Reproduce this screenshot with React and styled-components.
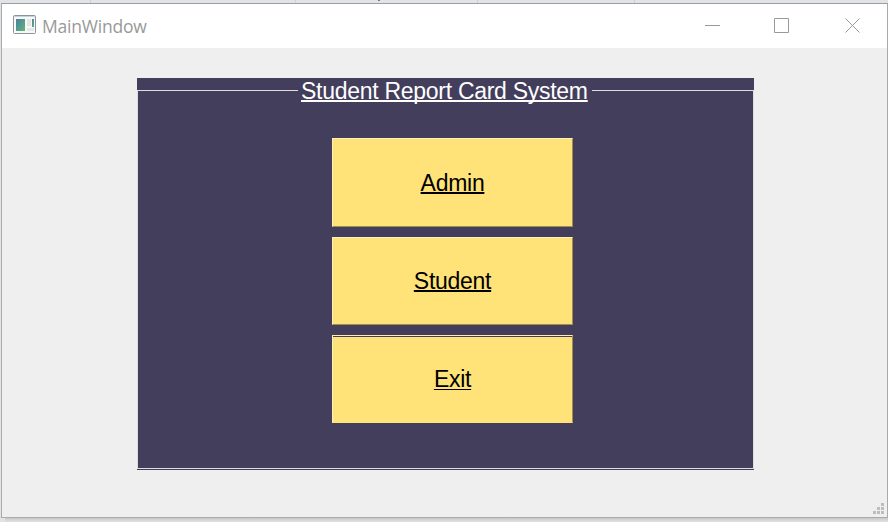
import React from "react";
import styled, { createGlobalStyle } from "styled-components";

const GlobalStyle = createGlobalStyle`
  * { box-sizing: border-box; }
  body { margin: 0; overflow: hidden; background: #e2e3e6; }
`;

const Desktop = styled.div`
  width: 888px;
  height: 522px;
  padding: 3px 0 4px 1px;
  background:
    linear-gradient(#77797c, #77797c) 378px 0 / 2px 1px no-repeat,
    linear-gradient(#cfd0d3, #cfd0d3) 90px 0 / 1px 3px no-repeat,
    linear-gradient(#cfd0d3, #cfd0d3) 295px 0 / 1px 3px no-repeat,
    linear-gradient(#cfd0d3, #cfd0d3) 477px 0 / 1px 3px no-repeat,
    linear-gradient(#cfd0d3, #cfd0d3) 634px 0 / 1px 3px no-repeat,
    linear-gradient(#c9c9c9, #e2e2e2) 5px 518px / 883px 4px no-repeat,
    #e2e3e6;
`;

const Window = styled.main`
  display: flex;
  flex-direction: column;
  width: 887px;
  height: 515px;
  border: 1px solid #a9aaab;
  border-top-color: #9b9ea2;
  background: #efefef;
`;

const TitleBar = styled.header`
  display: flex;
  align-items: center;
  height: 44px;
  flex: none;
  padding: 0 26px 0 11px;
  background: #fff;
`;

const AppIcon = styled.svg`
  display: block;
  width: 23px;
  height: 19px;
  margin-bottom: 3px;
`;

const WindowTitle = styled.span`
  margin: 0 auto 0 6px;
  padding-bottom: 1px;
  font: 17.5px/24px "Open Sans", sans-serif;
  letter-spacing: -0.2px;
  color: #999;
`;

const Controls = styled.div`
  display: flex;
  gap: 54px;
  height: 16px;
  margin-bottom: 3px;
`;

const ControlIcon = styled.svg`
  display: block;
  width: 16px;
  height: 16px;
  fill: none;
  stroke: #999;
  margin-left: ${({ $shift = 0 }) => $shift}px;
`;

const Content = styled.section`
  flex: 1;
  padding: 30px 0 0 135px;
`;

const Group = styled.section`
  display: flex;
  flex-direction: column;
  width: 617px;
  height: 392px;
  background: #433e5b;
`;

const Legend = styled.div`
  display: flex;
  align-items: flex-start;
  height: 12px;
`;

const Rule = styled.i`
  width: ${({ $width }) => $width}px;
  height: 1px;
  margin-top: 12px;
  background: #dedede;
`;

const Label = styled.span`
  display: block;
  font: 23px/26px "Liberation Sans", Arial, sans-serif;
  letter-spacing: -0.28px;
  white-space: nowrap;
  text-decoration: underline ${({ $thickness = 2 }) => $thickness}px;
  text-decoration-skip-ink: none;
  text-underline-offset: ${({ $offset = 1 }) => $offset}px;
`;

const Heading = styled.h1`
  width: 294px;
  margin: 0;
  padding-left: 3px;
  color: #fff;
`;

const Frame = styled.div`
  display: flex;
  flex-direction: column;
  gap: 10px;
  height: 379px;
  padding: 48px 0 0 194px;
  border: solid #dedede;
  border-width: 0 1px 1px;
`;

const MenuButton = styled.button`
  display: flex;
  align-items: center;
  justify-content: center;
  width: 241px;
  height: ${({ $height }) => $height}px;
  flex: none;
  padding: 0;
  color: #000;
  background: #ffe379;
  border: 1px solid;
  border-color: #fff0b9 #a08e4c ${({ $focused }) => ($focused ? "#ffe379" : "#a08e4c")} #fff0b9;
  border-radius: 0;
  box-shadow: ${({ $focused }) => ($focused ? "inset 0 1px #433e5b" : "none")};
`;

const GripRow = styled.div`
  display: flex;
  justify-content: flex-end;
  height: 14px;
  flex: none;
  padding-right: 3px;
`;

const Grip = styled.svg`
  display: block;
  width: 11px;
  height: 11px;
  fill: #bdbdbd;
`;

export default function App() {
  return (
    <>
      <GlobalStyle />
      <Desktop>
        <Window>
          <TitleBar>
            <AppIcon viewBox="0 0 23 19">
              <defs>
                <linearGradient id="screen" x1="0" y1="0" x2="1" y2="1">
                  <stop offset="0" stopColor="#477fa2" />
                  <stop offset="1" stopColor="#62b779" />
                </linearGradient>
              </defs>
              <rect x=".5" y=".5" width="22" height="18" rx="1" fill="#f8f8f8" stroke="#8b939b" />
              <path d="M1 1.5h21" stroke="#c9d0d8" />
              <path d="M3 4h9v12H3z" fill="url(#screen)" />
              <path d="M14 4h4v7h-4zM14 13h7v3h-7z" fill="#e5e6e6" />
              <path d="M19 4h2v8h-2z" fill="url(#screen)" />
            </AppIcon>
            <WindowTitle>MainWindow</WindowTitle>
            <Controls>
              <ControlIcon viewBox="0 0 16 16"><path d="M0 8.5h15" /></ControlIcon>
              <ControlIcon viewBox="0 0 16 16" $shift={-1}><path d="M.5 1.5h14v14H.5z" /></ControlIcon>
              <ControlIcon viewBox="0 0 16 16" $shift={1}><path d="m.5 1.5 14 14m0-14-14 14" /></ControlIcon>
            </Controls>
          </TitleBar>
          <Content>
            <Group>
              <Legend>
                <Rule $width={161} />
                <Heading><Label>Student Report Card System</Label></Heading>
                <Rule $width={162} />
              </Legend>
              <Frame>
                <MenuButton $height={89}><Label>Admin</Label></MenuButton>
                <MenuButton $height={88}><Label>Student</Label></MenuButton>
                <MenuButton $height={88} $focused><Label $thickness={1} $offset={2}>Exit</Label></MenuButton>
              </Frame>
            </Group>
          </Content>
          <GripRow>
            <Grip viewBox="0 0 11 11">
              <path d="M8 0h3v3H8zM4 4h3v3H4zM8 4h3v3H8zM0 8h3v3H0zM4 8h3v3H4zM8 8h3v3H8z" />
            </Grip>
          </GripRow>
        </Window>
      </Desktop>
    </>
  );
}
